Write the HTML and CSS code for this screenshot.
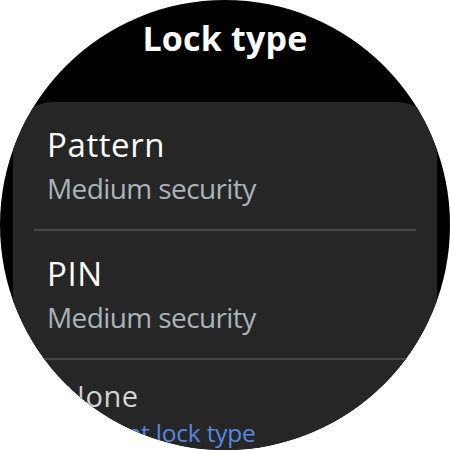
FILE: index.html
```html
<!DOCTYPE html>
<html>
<head>
<meta charset="utf-8">
<link rel="stylesheet" href="styles.css">
</head>
<body>
<div class="watch">
  <div class="header"><h1 class="title">Lock type</h1></div>
  <div class="card">
    <div class="item">
      <div class="item-title">Pattern</div>
      <div class="item-sub">Medium security</div>
    </div>
    <div class="divider"></div>
    <div class="item">
      <div class="item-title">PIN</div>
      <div class="item-sub">Medium security</div>
    </div>
    <div class="divider"></div>
    <div class="item item-small">
      <div class="item-title">None</div>
      <div class="item-sub item-current">Current lock type</div>
    </div>
  </div>
</div>
</body>
</html>
```
FILE: styles.css
```css
html, body {
  margin: 0;
  padding: 0;
  background: #ffffff;
}
body {
  width: 450px;
  height: 450px;
  overflow: hidden;
  font-family: "Open Sans", "Noto Sans", sans-serif;
}
.watch {
  width: 450px;
  height: 450px;
  border-radius: 50%;
  background: #000000;
  overflow: hidden;
  display: flex;
  flex-direction: column;
}
.header {
  height: 102px;
  flex: none;
  display: flex;
  justify-content: center;
}
.title {
  margin: 0;
  padding-top: 15px;
  font-size: 34px;
  line-height: 46px;
  font-weight: 700;
  color: #ffffff;
  letter-spacing: 0.2px;
}
.card {
  margin: 0 13px;
  background: #262626;
  border-radius: 40px 40px 0 0;
  flex: 1;
}
.item {
  padding: 23px 20px 23px 34px;
}
.item-title {
  font-size: 33px;
  line-height: 40px;
  color: #ffffff;
  letter-spacing: 0.6px;
}
.item-sub {
  margin-top: 5px;
  font-size: 28px;
  line-height: 36px;
  color: #a9b3bb;
  letter-spacing: -0.6px;
}
.divider {
  height: 2px;
  margin: 0 21px;
  background: #474747;
}
.item-small {
  padding: 18px 20px 0 50px;
}
.item-small .item-title {
  font-size: 29px;
  line-height: 35px;
  color: #d4d4d4;
}
.item-small .item-sub {
  margin-top: 4px;
  font-size: 24.5px;
  line-height: 31px;
  letter-spacing: -0.2px;
}
.item-current {
  color: #5688e0 !important;
}
```
